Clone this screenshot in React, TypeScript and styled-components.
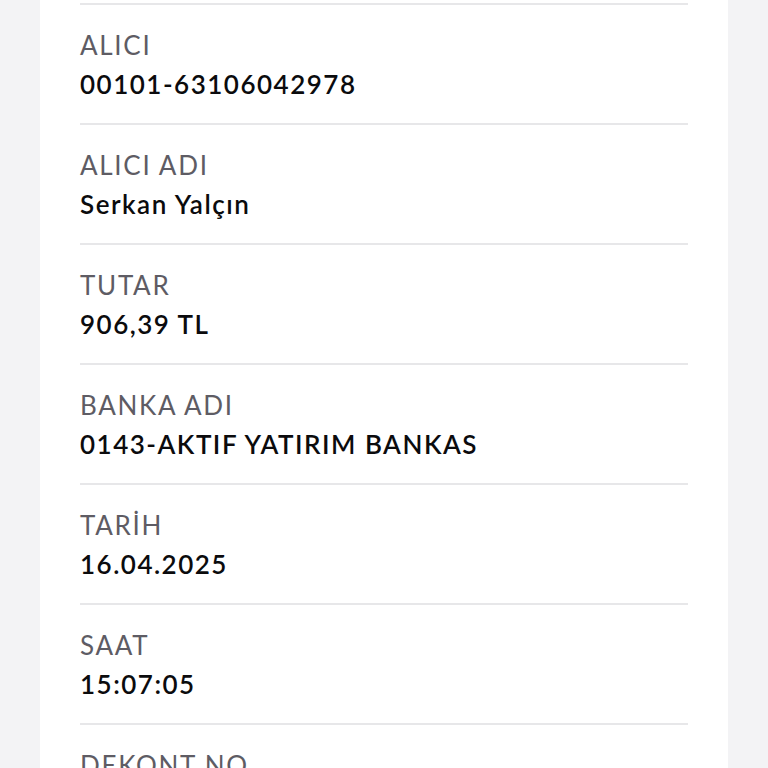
import React from "react";
import styled, { createGlobalStyle } from "styled-components";

const Global = createGlobalStyle`
  html, body { margin: 0; padding: 0; background: #f3f3f5; overflow: hidden; }
  body { font-family: "Lato", "Liberation Sans", sans-serif; }
`;

const Page = styled.div`
  height: 768px;
  overflow: hidden;
  padding: 0 40px;
`;

const Card = styled.div`
  background: #ffffff;
  min-height: 768px;
  padding: 3px 40px 0;
`;

const Row = styled.div`
  border-top: 2px solid #e7e7e9;
  height: 120px;
  display: flex;
  flex-direction: column;
  padding-top: 25px;
  box-sizing: border-box;
`;

const Label = styled.div`
  color: #5e5c64;
  font-size: 26px;
  line-height: 30px;
  font-weight: 400;
  letter-spacing: 1.7px;
`;

const Value = styled.div`
  color: #0b0b0d;
  font-size: 26px;
  line-height: 30px;
  margin-top: 9px;
  font-weight: 600;
  letter-spacing: 1.5px;
`;

const rows = [
  ["ALICI", "00101-63106042978"],
  ["ALICI ADI", "Serkan Yalçın"],
  ["TUTAR", "906,39 TL"],
  ["BANKA ADI", "0143-AKTIF YATIRIM BANKAS"],
  ["TARİH", "16.04.2025"],
  ["SAAT", "15:07:05"],
  ["DEKONT NO", ""],
];

export default function App() {
  return (
    <>
      <Global />
      <Page>
        <Card>
          {rows.map(([l, v]) => (
            <Row key={l}>
              <Label>{l}</Label>
              {v && <Value>{v}</Value>}
            </Row>
          ))}
        </Card>
      </Page>
    </>
  );
}
